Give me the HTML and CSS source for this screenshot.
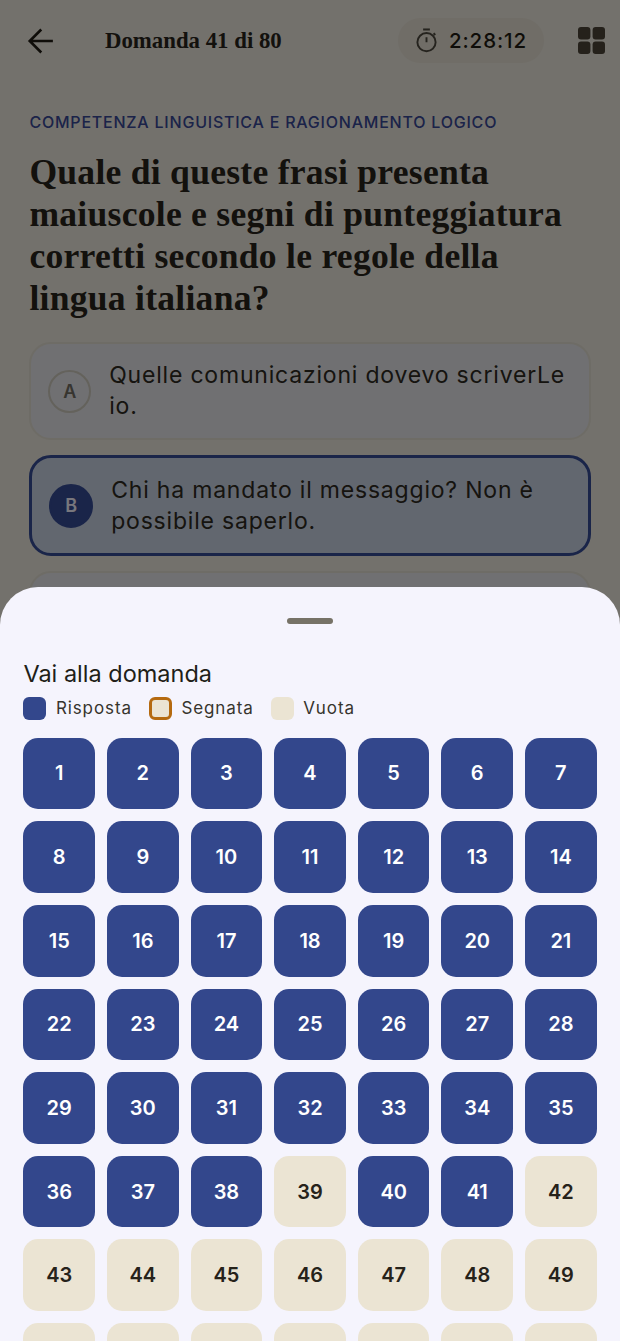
FILE: index.html
```html
<!DOCTYPE html>
<html lang="it">
<head>
<meta charset="utf-8">
<title>Domanda 41 di 80</title>
<link rel="stylesheet" href="styles.css">
</head>
<body>
<main class="page">
  <header class="topbar">
    <svg class="back" viewBox="0 0 24 24" width="30" height="30"><path d="M21.5 12H3.5M12.2 2.8 3 12l9.2 9.2" fill="none" stroke="currentColor" stroke-width="2.1"/></svg>
    <h1 class="title">Domanda 41 di 80</h1>
    <div class="timer">
      <svg class="timer-icon" viewBox="0 0 24 24" width="27" height="27"><path d="M9 2.2h6" fill="none" stroke="currentColor" stroke-width="1.8"/><circle cx="12" cy="13.5" r="8.1" fill="none" stroke="currentColor" stroke-width="1.7"/><path d="M12 9v4.5M18.3 5.6l1.5 1.5" fill="none" stroke="currentColor" stroke-width="1.7"/></svg>
      <span>2:28:12</span>
    </div>
    <svg class="gridbtn" viewBox="0 0 27 27" width="27" height="27"><rect width="12.4" height="12.4" rx="3"/><rect x="14.6" width="12.4" height="12.4" rx="3"/><rect y="14.6" width="12.4" height="12.4" rx="3"/><rect x="14.6" y="14.6" width="12.4" height="12.4" rx="3"/></svg>
  </header>
  <section class="content">
    <p class="category">Competenza linguistica e ragionamento logico</p>
    <h2 class="question">Quale di queste frasi presenta maiuscole e segni di punteggiatura corretti secondo le regole della lingua italiana?</h2>
    <div class="option"><span class="letter">A</span><span class="option-text">Quelle comunicazioni dovevo scriverLe io.</span></div>
    <div class="option selected"><span class="letter">B</span><span class="option-text">Chi ha mandato il messaggio? Non è possibile saperlo.</span></div>
    <div class="option"><span class="letter">C</span><span class="option-text">Non so dove sia andato.</span></div>
  </section>
</main>
<div class="scrim"></div>
<aside class="sheet">
  <div class="handle"></div>
  <h3 class="sheet-title">Vai alla domanda</h3>
  <ul class="legend">
    <li><i class="swatch answered"></i>Risposta</li>
    <li><i class="swatch marked"></i>Segnata</li>
    <li><i class="swatch empty"></i>Vuota</li>
  </ul>
  <div class="tiles">
    <a class="tile on">1</a><a class="tile on">2</a><a class="tile on">3</a><a class="tile on">4</a><a class="tile on">5</a><a class="tile on">6</a><a class="tile on">7</a>
    <a class="tile on">8</a><a class="tile on">9</a><a class="tile on">10</a><a class="tile on">11</a><a class="tile on">12</a><a class="tile on">13</a><a class="tile on">14</a>
    <a class="tile on">15</a><a class="tile on">16</a><a class="tile on">17</a><a class="tile on">18</a><a class="tile on">19</a><a class="tile on">20</a><a class="tile on">21</a>
    <a class="tile on">22</a><a class="tile on">23</a><a class="tile on">24</a><a class="tile on">25</a><a class="tile on">26</a><a class="tile on">27</a><a class="tile on">28</a>
    <a class="tile on">29</a><a class="tile on">30</a><a class="tile on">31</a><a class="tile on">32</a><a class="tile on">33</a><a class="tile on">34</a><a class="tile on">35</a>
    <a class="tile on">36</a><a class="tile on">37</a><a class="tile on">38</a><a class="tile">39</a><a class="tile on">40</a><a class="tile on">41</a><a class="tile">42</a>
    <a class="tile">43</a><a class="tile">44</a><a class="tile">45</a><a class="tile">46</a><a class="tile">47</a><a class="tile">48</a><a class="tile">49</a>
    <a class="tile blank"></a><a class="tile blank"></a><a class="tile blank"></a><a class="tile blank"></a><a class="tile blank"></a><a class="tile blank"></a><a class="tile blank"></a>
  </div>
</aside>
</body>
</html>
```

FILE: styles.css
```css
* { box-sizing: border-box; }
html, body { margin: 0; height: 100%; overflow: hidden; }
body {
  background: #e6e2d8;
  color: #1e1a12;
  font-family: "Inter", "Liberation Sans", sans-serif;
}
.page { height: 100%; overflow: hidden; }
.topbar {
  display: flex;
  align-items: center;
  height: 81px;
  padding: 0 15px 0 26px;
}
.back { color: #1e1a12; flex: none; }
.title {
  margin: 1px 0 0 49px;
  font: 700 22.8px/1 "Liberation Serif", serif;
  color: #26221a;
  flex: 1;
}
.timer {
  display: flex;
  align-items: center;
  gap: 9px;
  height: 45px;
  padding: 0 17px 0 15px;
  margin-right: 34px;
  border-radius: 23px;
  background: #e0dace;
  font-size: 20.5px;
  font-weight: 500;
  letter-spacing: 0.9px;
  color: #1e1a12;
}
.timer-icon { color: #4a463c; }
.gridbtn { fill: #4a4336; flex: none; }
.content { padding: 0 29.4px; }
.category {
  margin: 30.5px 0 0;
  font-size: 16px;
  line-height: 20px;
  font-weight: 500;
  letter-spacing: 0.78px;
  text-transform: uppercase;
  color: #374693;
}
.question {
  margin: 19px 0 23.5px;
  font: 700 35.6px/42px "Liberation Serif", serif;
  letter-spacing: 0.26px;
  color: #26221a;
}
.option {
  display: flex;
  align-items: center;
  gap: 18px;
  margin-bottom: 15px;
  padding: 16px 16px 16px 16.8px;
  border: 2px solid #dcd8cc;
  border-radius: 22px;
  background: #e0e0e4;
}
.option.selected {
  padding: 16.5px 16px 16.5px 16.8px;
  border: 3px solid #344a93;
  background: #c5cede;
}
.letter {
  flex: none;
  display: grid;
  place-items: center;
  width: 43px;
  height: 43px;
  border: 2px solid #c8c4b8;
  border-radius: 50%;
  font-size: 18px;
  font-weight: 600;
  color: #6e6a60;
}
.selected .letter {
  width: 44px;
  height: 44px;
  background: #344a93;
  border-color: #344a93;
  color: #f0eefa;
}
.option-text {
  font-size: 23px;
  line-height: 31px;
  letter-spacing: 0.8px;
  color: #2c2820;
}
.scrim {
  position: fixed;
  inset: 0;
  background: rgba(0, 0, 0, 0.5);
}
.sheet {
  position: fixed;
  left: 0;
  right: 0;
  bottom: 0;
  height: 754px;
  overflow: hidden;
  padding: 0 23.4px;
  background: #f5f4fd;
  border-radius: 38px 38px 0 0;
}
.handle {
  width: 46px;
  height: 6px;
  margin: 31px auto 0;
  border-radius: 3px;
  background: #767267;
}
.sheet-title {
  margin: 35px 0 0;
  font-size: 23.5px;
  line-height: 30px;
  font-weight: 400;
  color: #211e18;
}
.legend {
  display: flex;
  gap: 17px;
  margin: 8px 0 0;
  padding: 0;
  list-style: none;
}
.legend li {
  display: flex;
  align-items: center;
  gap: 9.5px;
  font-size: 17px;
  line-height: 23px;
  letter-spacing: 0.9px;
  color: #37342d;
}
.swatch {
  width: 23px;
  height: 23px;
  border-radius: 6px;
  background: #ebe4d3;
}
.swatch.answered { background: #33478c; }
.swatch.marked { border: 3px solid #b56a10; }
.tiles {
  display: grid;
  grid-template-columns: repeat(7, 1fr);
  gap: 12px;
  margin-top: 17.7px;
}
.tile {
  display: grid;
  place-items: center;
  aspect-ratio: 1;
  border-radius: 15px;
  background: #ebe4d3;
  font-size: 20px;
  font-weight: 600;
  color: #26221a;
}
.tile.on {
  background: #33478c;
  color: #fff;
}
```
